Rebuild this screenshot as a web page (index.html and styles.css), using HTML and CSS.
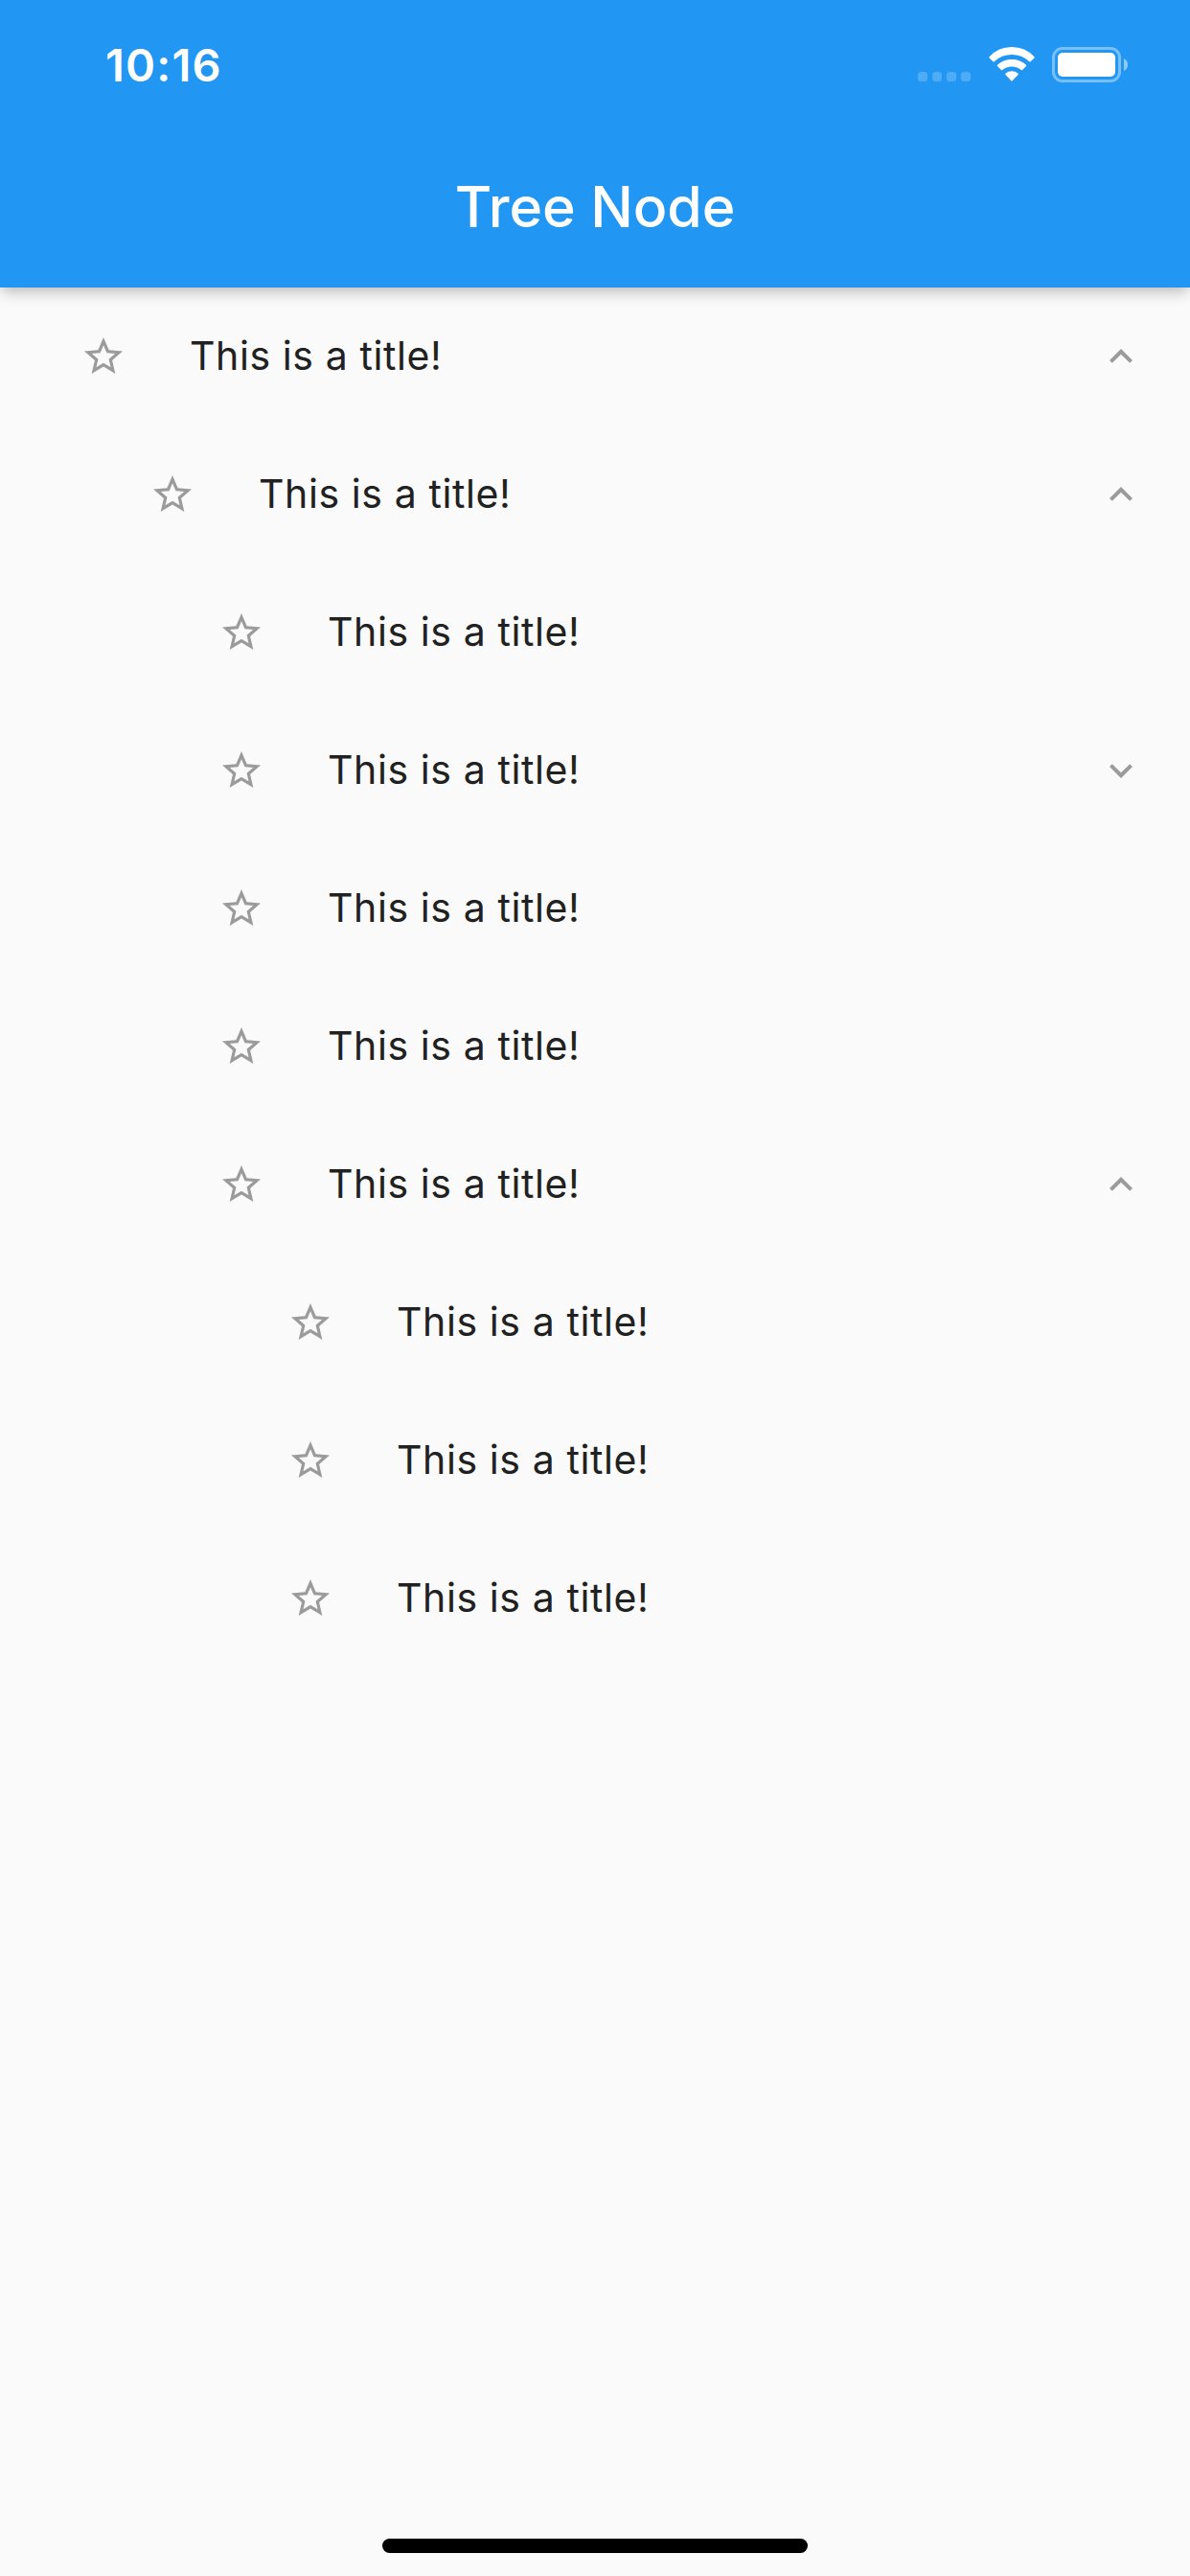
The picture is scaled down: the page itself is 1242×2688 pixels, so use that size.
FILE: index.html
```html
<!DOCTYPE html>
<html lang="en">
<head>
<meta charset="utf-8">
<title>Tree Node</title>
<link rel="stylesheet" href="styles.css">
</head>
<body>
<svg class="sprite" aria-hidden="true">
  <symbol id="star" viewBox="0 0 24 24"><path d="M22 9.24l-7.19-.62L12 2 9.19 8.63 2 9.24l5.46 4.73L5.82 21 12 17.27 18.18 21l-1.63-7.03L22 9.24zM12 15.4l-3.76 2.27 1-4.28-3.32-2.88 4.38-.38L12 6.1l1.71 4.04 4.38.38-3.32 2.88 1 4.28L12 15.4z"/></symbol>
  <symbol id="up" viewBox="0 0 24 24"><path d="M12 8l-6 6 1.41 1.41L12 10.83l4.59 4.58L18 14z"/></symbol>
  <symbol id="down" viewBox="0 0 24 24"><path d="M16.59 8.59L12 13.17 7.41 8.59 6 10l6 6 6-6z"/></symbol>
</svg>
<div class="screen">
  <header class="app-bar">
    <div class="status">
      <span class="time">10:16</span>
      <div class="indicators">
        <svg class="signal" viewBox="0 0 55 10"><rect width="10" height="10" rx="3"/><rect x="15" width="10" height="10" rx="3"/><rect x="30" width="10" height="10" rx="3"/><rect x="45" width="10" height="10" rx="3"/></svg>
        <svg class="wifi" viewBox="0 0 48 36"><path d="M.5 10.2Q10 0 24 0T47.500 10.200Q48 10.800 47.500 11.400L43.600 15.200Q43 15.700 42.400 15.200Q34.500 8 24 8T5.600 15.200Q5 15.700 4.400 15.200L.5 11.400Q0 10.800.5 10.200ZM9 18.700Q15 13 24 13T39 18.700Q39.700 19.300 39 20L35 24Q34.400 24.600 33.700 24Q30 20.400 24 20.400T14.300 24Q13.600 24.600 13 24L9 20Q8.300 19.300 9 18.700ZM17.600 27.600Q20.300 25.300 24 25.300T30.400 27.600Q31.100 28.200 30.500 28.900L24.600 35.200Q24 35.800 23.400 35.200L17.500 28.900Q16.900 28.200 17.600 27.600Z"/></svg>
        <svg class="battery" viewBox="0 0 80 37"><rect class="shell" x="1.500" y="1.500" width="69" height="34" rx="9.500"/><rect x="6" y="6" width="60" height="25" rx="5"/><path class="tip" d="M75 12Q79 14 79 18.500T75 25Z"/></svg>
      </div>
    </div>
    <h1 class="heading">Tree Node</h1>
  </header>
  <main class="tree">
    <div class="node level-0"><svg class="icon"><use href="#star"/></svg><span class="title">This is a title!</span><svg class="icon"><use href="#up"/></svg></div>
    <div class="node level-1"><svg class="icon"><use href="#star"/></svg><span class="title">This is a title!</span><svg class="icon"><use href="#up"/></svg></div>
    <div class="node level-2"><svg class="icon"><use href="#star"/></svg><span class="title">This is a title!</span></div>
    <div class="node level-2"><svg class="icon"><use href="#star"/></svg><span class="title">This is a title!</span><svg class="icon"><use href="#down"/></svg></div>
    <div class="node level-2"><svg class="icon"><use href="#star"/></svg><span class="title">This is a title!</span></div>
    <div class="node level-2"><svg class="icon"><use href="#star"/></svg><span class="title">This is a title!</span></div>
    <div class="node level-2"><svg class="icon"><use href="#star"/></svg><span class="title">This is a title!</span><svg class="icon"><use href="#up"/></svg></div>
    <div class="node level-3"><svg class="icon"><use href="#star"/></svg><span class="title">This is a title!</span></div>
    <div class="node level-3"><svg class="icon"><use href="#star"/></svg><span class="title">This is a title!</span></div>
    <div class="node level-3"><svg class="icon"><use href="#star"/></svg><span class="title">This is a title!</span></div>
  </main>
  <footer class="home"><div class="home-bar"></div></footer>
</div>
</body>
</html>
```
FILE: styles.css
```css
* { box-sizing: border-box; }
body { margin: 0; background: #fafafa; font-family: Inter, "Liberation Sans", sans-serif; }
svg { display: block; flex: none; }
.sprite { display: none; }
.screen { display: flex; flex-direction: column; height: 2688px; }
.app-bar {
  height: 300px;
  background: #2196f3;
  color: #fff;
  box-shadow: 0 6px 12px -3px rgba(0,0,0,.18), 0 10px 15px rgba(0,0,0,.05), 0 3px 20px rgba(0,0,0,.05);
}
.status { display: flex; justify-content: space-between; height: 132px; padding: 0 64px 0 110px; }
.time { padding-top: 39px; font-size: 47px; line-height: 57px; font-weight: 600; letter-spacing: 1.2px; }
.indicators { display: flex; align-items: flex-start; padding-top: 49px; fill: #fff; }
.signal { width: 55px; height: 10px; margin: 26px 19px 0 0; opacity: .2; }
.wifi { width: 48px; height: 36px; margin-right: 18px; }
.battery { width: 80px; height: 37px; }
.shell { fill: none; stroke: #fff; stroke-width: 3px; opacity: .4; }
.tip { opacity: .5; }
.heading { margin: 0; text-align: center; font-size: 59px; line-height: 168px; font-weight: 500; letter-spacing: -0.1px; }
.tree { flex: 1; }
.node { display: flex; align-items: center; height: 144px; padding-right: 48px; }
.level-0 { padding-left: 84px; }
.level-1 { padding-left: 156px; }
.level-2 { padding-left: 228px; }
.level-3 { padding-left: 300px; }
.icon { width: 48px; height: 48px; fill: #9b9b9b; }
.title { flex: 1; margin-left: 66px; padding-bottom: 2px; font-size: 41px; line-height: 60px; letter-spacing: .6px; color: #212121; }
.home { display: flex; justify-content: center; height: 39px; }
.home-bar { width: 444px; height: 15px; border-radius: 8px; background: #000; }
```
